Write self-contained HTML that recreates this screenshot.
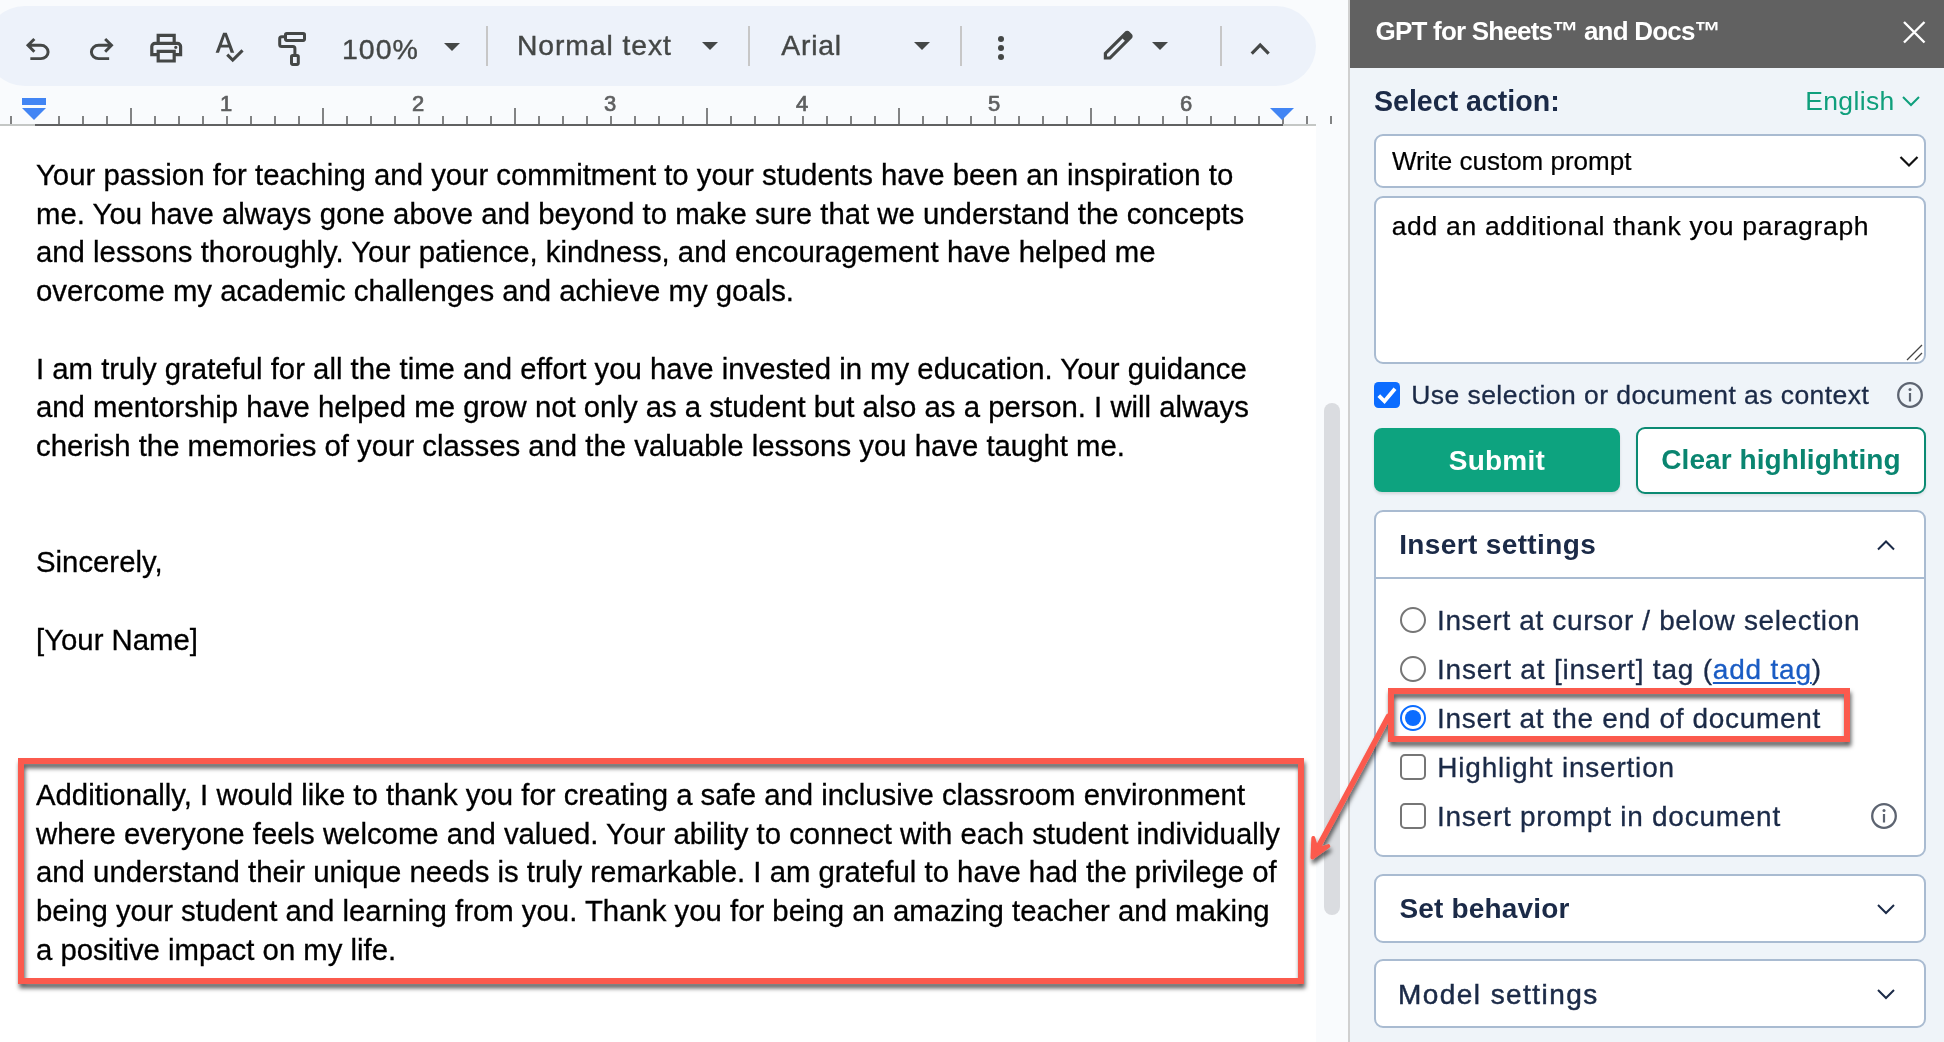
<!DOCTYPE html>
<html lang="en">
<head>
<meta charset="utf-8">
<title>GPT for Sheets and Docs</title>
<style>
*{box-sizing:border-box;margin:0;padding:0}
html,body{width:1944px;height:1042px;overflow:hidden;background:#f9fbfd;font-family:"Liberation Sans",sans-serif}
#root{position:absolute;left:0;top:0;width:1944px;height:1042px;will-change:transform;overflow:hidden}
.abs{position:absolute}
.t{position:absolute;white-space:nowrap;line-height:1}
#pill{left:-15px;top:6px;width:1331px;height:80px;border-radius:40px;background:#edf2fa}
.tb{color:#444746;-webkit-text-stroke:0.4px #444746}
.sep{width:2px;height:40px;top:26px;background:#c7c7c7}
.tri{width:0;height:0;border-left:8px solid transparent;border-right:8px solid transparent;border-top:8px solid #444746}
.rn{color:#5e5f60;font-size:22px;-webkit-text-stroke:0.7px #5e5f60;top:93.2px;width:40px;text-align:center}
#page{left:0;top:126px;width:1316px;height:916px;background:#fff}
.dl{position:absolute;left:36px;white-space:nowrap;font-size:29.33px;line-height:38px;color:#000;height:38px;-webkit-text-stroke:0.3px #000}
#panel{left:1350px;top:0;width:594px;height:1042px;background:#eff4f9}
#pborder{left:1348px;top:0;width:2px;height:1042px;background:#d0d0d0}
#phead{left:1350px;top:0;width:594px;height:68px;background:#616161}
.card{position:absolute;background:#fff;border:2px solid #a9bbd1;border-radius:9px}
.rad{position:absolute;width:26px;height:26px;border-radius:50%;border:2px solid #767676;background:#fff}
.chk{position:absolute;width:26px;height:26px;border-radius:5px;border:2px solid #767676;background:#fff}
a.lk{color:#1a5cc4;-webkit-text-stroke-color:#1a5cc4;text-decoration:underline;text-decoration-thickness:2px;text-underline-offset:2.5px}
</style>
</head>
<body>
<div id="root">
<div id="pill" class="abs"></div>
<svg class="abs" style="left:20.4px;top:32.3px" width="35.5" height="35.5" viewBox="0 0 24 24" fill="#444746"><path d="M7 19v-2h7.1q1.575 0 2.738-1T18 13.5 16.838 11 14.1 10H7.8l2.6 2.6L9 14 4 9l5-5 1.4 1.4L7.8 8h6.3q2.425 0 4.163 1.575T20 13.5t-1.738 3.925T14.1 19z"/></svg>
<svg class="abs" style="left:84.1px;top:32.3px" width="35.5" height="35.5" viewBox="0 0 24 24" fill="#444746"><path d="M9.9 19q-2.425 0-4.163-1.575T4 13.5t1.738-3.925T9.9 8h6.3l-2.6-2.6L15 4l5 5-5 5-1.4-1.4 2.6-2.6H9.9q-1.575 0-2.738 1T6 13.5 7.163 16 9.9 17H17v2z"/></svg>
<svg class="abs" style="left:146.8px;top:28.8px" width="38.4" height="38.4" viewBox="0 0 24 24" fill="#444746"><path d="M16 8V5H8v3H6V3h12v5zm2 4.5q.425 0 .713-.288T19 11.5t-.288-.713T18 10.5t-.713.288T17 11.5t.288.713T18 12.5M16 19v-4H8v4zm2 2H6v-4H2v-6q0-1.275.875-2.137T5 8h14q1.275 0 2.138.863T22 11v6h-4zm2-6v-4q0-.425-.288-.713T19 10H5q-.425 0-.713.288T4 11v4h2v-2h12v2z"/></svg>
<svg class="abs" style="left:211.4px;top:27.5px" width="37" height="37" viewBox="0 0 24 24" fill="#444746"><path d="M14.1 22.25l-4.25-4.25 1.4-1.4 2.85 2.85 5.65-5.65 1.4 1.4zM3 16L7.85 3h2.35l4.85 13h-2.3l-1.15-3.3H6.35L5.2 16zm4.05-5.2h3.9l-1.9-5.4h-.1z"/></svg>
<svg class="abs" style="left:270px;top:25px" width="45" height="45" viewBox="270 25 45 45" fill="none" stroke="#444746" stroke-width="3" stroke-linejoin="round"><rect x="285.5" y="33.5" width="19" height="6.9" rx="1.3"/><path d="M285.5 36.7H281.7a2 2 0 0 0-2 2V44.5a2 2 0 0 0 2 2H292.9a2 2 0 0 1 2 2V55.5"/><rect x="291.5" y="55.5" width="6.8" height="8.9" rx="1.3"/></svg>
<svg class="abs" style="left:983px;top:30px" width="36" height="36" viewBox="0 0 24 24" fill="#444746"><circle cx="12" cy="6" r="2"/><circle cx="12" cy="12" r="2"/><circle cx="12" cy="18" r="2"/></svg>
<svg class="abs" style="left:1098.8px;top:25.8px" width="38.4" height="38.4" viewBox="0 0 24 24" fill="#444746"><path d="M5 19h1.425L16.2 9.225 14.775 7.8 5 17.575zm-2 2v-4.25L16.2 3.575q.3-.275.663-.425t.762-.15.775.15.65.45L20.425 5q.3.275.438.65T21 6.4q0 .4-.137.763t-.438.662L7.25 21zM19 6.4 17.6 5zm-3.525 2.125-.7-.725L16.2 9.225z"/></svg>
<svg class="abs" style="left:1240.8px;top:29.78px" width="38.4" height="38.4" viewBox="0 0 24 24" fill="#444746"><path d="M12 10.8l-4.6 4.6L6 14l6-6 6 6-1.4 1.4z"/></svg>
<div class="abs tri" style="left:444px;top:43px"></div>
<div class="abs tri" style="left:702px;top:42px"></div>
<div class="abs tri" style="left:914px;top:42px"></div>
<div class="abs tri" style="left:1152px;top:42px"></div>
<div class="abs sep" style="left:486px"></div>
<div class="abs sep" style="left:748px"></div>
<div class="abs sep" style="left:960px"></div>
<div class="abs sep" style="left:1220px"></div>
<svg class="abs" style="left:0;top:90px" width="1348" height="40" viewBox="0 90 1348 40"><rect x="0" y="124" width="35" height="2" fill="#c4c7c5"/><rect x="35" y="124" width="1248" height="2" fill="#606162"/><rect x="1283" y="124" width="33" height="2" fill="#c4c7c5"/><path d="M11 116v8M59 116v8M83 116v8M107 116v8M131 108v16M155 116v8M179 116v8M203 116v8M227 116v8M251 116v8M275 116v8M299 116v8M323 108v16M347 116v8M371 116v8M395 116v8M419 116v8M443 116v8M467 116v8M491 116v8M515 108v16M539 116v8M563 116v8M587 116v8M611 116v8M635 116v8M659 116v8M683 116v8M707 108v16M731 116v8M755 116v8M779 116v8M803 116v8M827 116v8M851 116v8M875 116v8M899 108v16M923 116v8M947 116v8M971 116v8M995 116v8M1019 116v8M1043 116v8M1067 116v8M1091 108v16M1115 116v8M1139 116v8M1163 116v8M1187 116v8M1211 116v8M1235 116v8M1259 116v8M1283 108v16M1307 116v8M1331 116v8" stroke="#828384" stroke-width="2" fill="none"/><rect x="22" y="98" width="24" height="7" fill="#4285f4"/><path d="M22 108h24l-12 12z" fill="#4285f4"/><path d="M1270 108h24l-12 12z" fill="#4285f4"/></svg>
<div class="t rn" style="left:206px">1</div>
<div class="t rn" style="left:398px">2</div>
<div class="t rn" style="left:590px">3</div>
<div class="t rn" style="left:782px">4</div>
<div class="t rn" style="left:974px">5</div>
<div class="t rn" style="left:1166px">6</div>
<div id="page" class="abs"></div>
<div class="dl" style="top:155.85px">Your passion for teaching and your commitment to your students have been an inspiration to</div>
<div class="dl" style="top:194.60px">me. You have always gone above and beyond to make sure that we understand the concepts</div>
<div class="dl" style="top:233.35px">and lessons thoroughly. Your patience, kindness, and encouragement have helped me</div>
<div class="dl" style="top:272.10px">overcome my academic challenges and achieve my goals.</div>
<div class="dl" style="top:349.60px">I am truly grateful for all the time and effort you have invested in my education. Your guidance</div>
<div class="dl" style="top:388.35px">and mentorship have helped me grow not only as a student but also as a person. I will always</div>
<div class="dl" style="top:427.10px">cherish the memories of your classes and the valuable lessons you have taught me.</div>
<div class="dl" style="top:543.35px">Sincerely,</div>
<div class="dl" style="top:620.85px">[Your Name]</div>
<div class="dl" style="top:775.85px">Additionally, I would like to thank you for creating a safe and inclusive classroom environment</div>
<div class="dl" style="top:814.60px">where everyone feels welcome and valued. Your ability to connect with each student individually</div>
<div class="dl" style="top:853.35px">and understand their unique needs is truly remarkable. I am grateful to have had the privilege of</div>
<div class="dl" style="top:892.10px">being your student and learning from you. Thank you for being an amazing teacher and making</div>
<div class="dl" style="top:930.85px">a positive impact on my life.</div>
<div class="abs" style="left:1324px;top:402.5px;width:16px;height:512px;border-radius:8px;background:#dadce0"></div>
<div id="pborder" class="abs"></div><div id="panel" class="abs"></div><div id="phead" class="abs"></div>
<svg class="abs" style="left:1900px;top:18px" width="28" height="28" viewBox="0 0 28 28"><path d="M4 4L24.5 24.5M24.5 4L4 24.5" stroke="#fff" stroke-width="2.4" fill="none"/></svg>
<svg class="abs" style="left:1900px;top:92px" width="24" height="18" viewBox="0 0 24 18"><path d="M3 5L11 13L19 5" stroke="#0f9f7c" stroke-width="2" fill="none"/></svg>
<div class="card" style="left:1374px;top:134px;width:552px;height:54px"></div>
<svg class="abs" style="left:1895px;top:148.5px" width="28" height="22" viewBox="0 0 28 22"><path d="M5.5 8L14 16.5L22.5 8" stroke="#111" stroke-width="2.2" fill="none"/></svg>
<div class="card" style="left:1374px;top:196px;width:552px;height:168px"></div>
<svg class="abs" style="left:1904px;top:342px" width="20" height="20" viewBox="0 0 20 20"><path d="M3 18L18 3M11 18L18 11" stroke="#444" stroke-width="1.3" fill="none"/></svg>
<div class="abs" style="left:1374px;top:382px;width:26px;height:26px;border-radius:4.5px;background:#0b6cff"></div>
<svg class="abs" style="left:1374px;top:382px" width="26" height="26" viewBox="0 0 26 26"><path d="M4.8 13.6L10.5 19.3L21 6.8" stroke="#fff" stroke-width="3.8" fill="none"/></svg>
<svg class="abs" style="left:1895px;top:380px" width="30" height="30" viewBox="0 0 30 30"><circle cx="15" cy="15" r="11.8" stroke="#5d6471" stroke-width="2.3" fill="none"/><rect x="13.9" y="13" width="2.2" height="8.5" fill="#5d6471"/><circle cx="15" cy="9.6" r="1.5" fill="#5d6471"/></svg>
<div class="abs" style="left:1374px;top:428px;width:246px;height:64px;border-radius:8px;background:#0da37f;box-shadow:0 2px 3px rgba(0,0,0,.12)"></div>
<div class="abs" style="left:1636px;top:426.5px;width:290px;height:67px;border-radius:9px;background:#fff;border:2px solid #0b8a73;box-shadow:0 2px 3px rgba(0,0,0,.08)"></div>
<div class="card" style="left:1374px;top:510px;width:552px;height:347px"></div>
<div class="abs" style="left:1376px;top:577px;width:548px;height:2px;background:#a9bbd1"></div>
<svg class="abs" style="left:1874px;top:535px" width="24" height="20" viewBox="0 0 24 20"><path d="M4 14.5L12 6.5L20 14.5" stroke="#1b2a47" stroke-width="2" fill="none"/></svg>
<div class="rad" style="left:1400px;top:607px"></div>
<div class="rad" style="left:1400px;top:656px"></div>
<div class="rad" style="left:1400px;top:705px;border-color:#0b6cff"></div><div class="abs" style="left:1405px;top:710px;width:16px;height:16px;border-radius:50%;background:#0b6cff"></div>
<div class="chk" style="left:1400px;top:754px"></div>
<div class="chk" style="left:1400px;top:803px"></div>
<svg class="abs" style="left:1869px;top:801px" width="30" height="30" viewBox="0 0 30 30"><circle cx="15" cy="15" r="11.8" stroke="#5d6471" stroke-width="2.3" fill="none"/><rect x="13.9" y="13" width="2.2" height="8.5" fill="#5d6471"/><circle cx="15" cy="9.6" r="1.5" fill="#5d6471"/></svg>
<div class="card" style="left:1374px;top:874px;width:552px;height:69px"></div>
<svg class="abs" style="left:1874px;top:899px" width="24" height="20" viewBox="0 0 24 20"><path d="M4 6L12 14L20 6" stroke="#1b2a47" stroke-width="2" fill="none"/></svg>
<div class="card" style="left:1374px;top:959px;width:552px;height:69px"></div>
<svg class="abs" style="left:1874px;top:984px" width="24" height="20" viewBox="0 0 24 20"><path d="M4 6L12 14L20 6" stroke="#1b2a47" stroke-width="2" fill="none"/></svg>
<div class="t tb" style="left:342.00px;top:34.5px;font-size:28.5px;letter-spacing:1.000px">100%</div>
<div class="t tb" style="left:517.00px;top:31.1px;font-size:28.3px;letter-spacing:0.925px">Normal text</div>
<div class="t tb" style="left:781.25px;top:31.1px;font-size:28.3px;letter-spacing:0.812px">Arial</div>
<div class="t" style="left:1375.50px;top:18.3px;font-size:26px;font-weight:bold;color:#fff;letter-spacing:-0.790px">GPT for Sheets™ and Docs™</div>
<div class="t" style="left:1374.00px;top:87.4px;font-size:28.6px;font-weight:bold;color:#1b2a47;letter-spacing:-0.019px">Select action:</div>
<div class="t" style="left:1805.25px;top:87.5px;font-size:26.5px;color:#0f9f7c;letter-spacing:0.350px">English</div>
<div class="t" style="left:1392.00px;top:148.2px;font-size:26px;color:#000;-webkit-text-stroke:0.2px #000;letter-spacing:0.003px">Write custom prompt</div>
<div class="t" style="left:1391.70px;top:213.3px;font-size:26.5px;color:#000;-webkit-text-stroke:0.25px #000;letter-spacing:0.682px">add an additional thank you paragraph</div>
<div class="t" style="left:1411.20px;top:382.4px;font-size:26.5px;color:#1b2a47;-webkit-text-stroke:0.3px #1b2a47;letter-spacing:0.451px">Use selection or document as context</div>
<div class="t" style="left:1448.75px;top:446.5px;font-size:28px;font-weight:bold;color:#fff;letter-spacing:0.230px">Submit</div>
<div class="t" style="left:1661.25px;top:446.3px;font-size:28px;font-weight:bold;color:#0a8570;letter-spacing:0.079px">Clear highlighting</div>
<div class="t" style="left:1399.15px;top:531.1px;font-size:28px;font-weight:bold;color:#1b2a47;letter-spacing:0.371px">Insert settings</div>
<div class="t" style="left:1437.00px;top:606.7px;font-size:28px;color:#1b2a47;-webkit-text-stroke:0.3px #1b2a47;letter-spacing:0.635px">Insert at cursor / below selection</div>
<div class="t" style="left:1437.00px;top:655.7px;font-size:28px;color:#1b2a47;-webkit-text-stroke:0.3px #1b2a47;letter-spacing:0.794px">Insert at [insert] tag (<a class="lk">add tag</a>)</div>
<div class="t" style="left:1437.00px;top:704.7px;font-size:28px;color:#1b2a47;-webkit-text-stroke:0.3px #1b2a47;letter-spacing:0.680px">Insert at the end of document</div>
<div class="t" style="left:1437.25px;top:753.7px;font-size:28px;color:#1b2a47;-webkit-text-stroke:0.3px #1b2a47;letter-spacing:0.792px">Highlight insertion</div>
<div class="t" style="left:1437.00px;top:802.7px;font-size:28px;color:#1b2a47;-webkit-text-stroke:0.3px #1b2a47;letter-spacing:0.748px">Insert prompt in document</div>
<div class="t" style="left:1399.45px;top:894.8px;font-size:28px;font-weight:bold;color:#1b2a47;letter-spacing:0.182px">Set behavior</div>
<div class="t" style="left:1398.00px;top:980.8px;font-size:28px;color:#1b2a47;-webkit-text-stroke:0.5px #1b2a47;letter-spacing:1.435px">Model settings</div>
<svg class="abs" style="left:0;top:0;pointer-events:none" width="1944" height="1042" viewBox="0 0 1944 1042"><defs><filter id="sh" x="-5%" y="-5%" width="110%" height="115%"><feDropShadow dx="1.2" dy="4.3" stdDeviation="1.9" flood-color="#000" flood-opacity="0.62"/></filter></defs><g filter="url(#sh)" fill="none" stroke="#fb5a4d" stroke-width="6"><rect x="21" y="761" width="1280" height="220"/><rect x="1391" y="691" width="456" height="48"/><path d="M1388.6 716.2L1314.4 854.0" stroke-width="5.6" stroke-linecap="round"/><path d="M1313.3 838.0L1312.5 857.5L1328.3 846.1L1316.8 849.6Z" fill="#fb5a4d" stroke-width="4" stroke-linejoin="round" stroke-linecap="round"/></g></svg>
</div>
</body>
</html>
